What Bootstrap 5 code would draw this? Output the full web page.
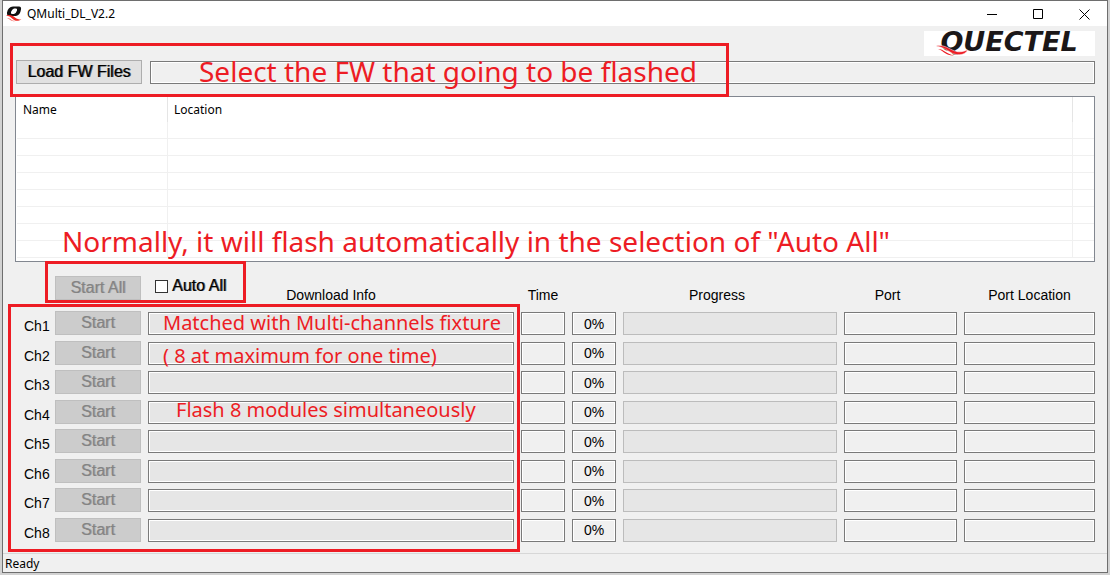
<!DOCTYPE html>
<html lang="en">
<head>
<meta charset="utf-8">
<meta name="viewport" content="width=device-width, initial-scale=1">
<title>QMulti_DL_V2.2</title>
<link rel="stylesheet" href="https://cdn.jsdelivr.net/npm/bootstrap@5.3.0/dist/css/bootstrap.min.css">
<style>
  :root { --face: #f0f0f0; --edge: #7a7a7a; --note: #ed1c24; }
  body { background: #d2d2d2; color: #000; font: 12px/16px "Noto Sans", sans-serif; }
  .app-window { min-height: 100vh; padding: 0 2px 2px; }
  .app-frame { background: var(--face); border: 1px solid #6e6e6e; }
  .title-bar { height: 25px; background: #fff; padding-left: 3px; }
  .title-bar span { margin-left: 5px; }
  .title-bar button { width: 46px; height: 25px; border: 0; background: none; padding: 0; }
  .app-main { padding: 5px 12px 11px; }
  .brand { width: 171px; height: 25px; background: #fff; overflow: visible; }
  .brand text { font: italic bold 27px "DejaVu Sans", sans-serif; fill: #1b1718; }

  .btn-win { height: 24px; padding: 0; border: 1px solid #adadad; border-radius: 0; background: #e1e1e1;
    font: 16px/22px "Liberation Sans", sans-serif; color: #000; }
  .btn-win:disabled { background: #ccc; border-color: #bfbfbf; color: #838383; opacity: 1; text-shadow: 1px 0 0 rgba(131, 131, 131, .5); }
  .heavy { text-shadow: 1px 0 0 rgba(0, 0, 0, .6); }
  .btn-load { width: 126px; }

  .field { height: 23px; width: 100%; min-width: 0; padding: 0 4px; border: 1px solid var(--edge); border-radius: 0;
    background: var(--face); box-shadow: inset 0 0 0 1px #fff; }
  .field-info { background: #e6e6e6; }
  .field-pct { text-align: center; }
  .meter { height: 23px; border: 1px solid #bcbcbc; background: #e6e6e6; border-radius: 0; }
  .narrow { font: 14px/18px "Liberation Sans Narrow", "Liberation Sans", sans-serif; }

  .tool-row { margin-top: 4px; padding-left: 1px; z-index: 1; }
  .file-list { margin-top: 12px; background: #fff; border: 1px solid #828790; padding: 0 0 3px 1px; }
  .file-list table { width: 100%; table-layout: fixed; border-collapse: separate; border-spacing: 0; }
  .file-list th { height: 25px; font-weight: 400; padding: 0 6px; border-right: 1px solid #e5e5e5; }
  .file-list td { height: 17px; padding: 0; border-right: 1px solid #f0f0f0; border-bottom: 1px solid #f0f0f0; }
  .file-list th:last-child, .file-list td:last-child { border-right: 0; }
  .col-name { width: 151px; }
  .col-end { width: 21px; }

  .ch-grid { display: grid; column-gap: 7px; padding-left: 9px;
    grid-template-columns: 24px 86px minmax(0, 366fr) 44px 44px minmax(0, 214fr) minmax(0, 113fr) minmax(0, 131fr); }
  .ch-head { height: 24px; margin-top: 14px; }
  .ch-head .narrow { padding-top: 10px; text-align: center; white-space: nowrap; }
  .ch-head .lead-in { padding-right: 26px; }
  .ch-body { margin-top: 12px; align-content: space-between; row-gap: 6px; }
  .ch-body > * { align-self: start; }
  .ch-body > .btn-win { margin: -1px 0 0; }
  .ch-label { height: 23px; padding-top: 5px; }
  .auto-all { left: 7px; top: 1px; font: 16px/18px "Liberation Sans", sans-serif; gap: 4px; }
  .auto-all input { appearance: none; width: 13px; height: 13px; margin: 0; border: 1px solid #333; background: #fff; }
  .auto-all input:checked { background: #333; }

  .mark-box { position: absolute; border: 3px solid var(--note); pointer-events: none; }
  .note { position: absolute; color: var(--note); white-space: nowrap; pointer-events: none; }
  .note-lg { font: 28px/36px "Noto Sans", sans-serif; }
  .note-md { font: 20px/24px "Noto Sans", sans-serif; }
  .mark-load { left: -5px; right: 366px; top: -17px; bottom: -13px; }
  .note-load { left: 184px; top: -7px; }
  .note-auto { left: 46px; bottom: 2px; }
  .mark-auto { left: 30px; top: -15px; width: 201px; height: 42px; }
  .ch-body > .mark-channels { left: -7px; top: -8px; bottom: -10px; width: 512px; align-self: stretch; }
  .note-c1 { left: 148px; top: -1px; }
  .note-c2 { left: 148px; top: 32px; }
  .note-c3 { left: 161px; top: 86px; }

  .status-bar { border-top: 1px solid #d7d7d7; height: 19px; padding: 2px 2px 0; }
</style>
</head>
<body>
<div class="app-window d-flex flex-column">
  <div class="app-frame d-flex flex-column flex-grow-1">
    <header class="title-bar d-flex align-items-center">
      <svg width="16" height="16" viewBox="0 0 16 16" aria-hidden="true">
        <path fill="#111" fill-rule="evenodd" d="M7 .5H13Q15.500.500 15 3.500Q14.200 9 10 10H4Q.5 10 1 6.500Q2 1 7 .5ZM8 2.500Q6 3 5 6Q4.500 8 6 8H8Q10 7.500 11 4.500Q11.500 2.500 10 2.500Z"/>
        <path d="M0 9.600C4 8.200 7 10 9 11.500S13 13.600 15.500 13.500C11 16 8.400 14.500 6.400 12.700S3 10 0 9.600Z" fill="#ee2a24"/>
        <path d="M1 12C4 11.500 5 14.500 9 15C5 16 4 13 1 12Z" fill="#f36c66"/>
      </svg>
      <span class="flex-grow-1">QMulti_DL_V2.2</span>
      <button type="button" aria-label="Minimize"><svg width="11" height="11" viewBox="0 0 11 11"><path d="M0 5.500H10" stroke="#000"/></svg></button>
      <button type="button" aria-label="Maximize"><svg width="11" height="11" viewBox="0 0 11 11"><path d="M.5.500H9.500V9.500H.5Z" fill="none" stroke="#000"/></svg></button>
      <button type="button" aria-label="Close"><svg width="11" height="11" viewBox="0 0 11 11"><path d="M.5.500L10.500 10.500M10.500.500L.5 10.500" stroke="#000"/></svg></button>
    </header>

    <main class="app-main d-flex flex-column flex-grow-1">
      <div class="d-flex justify-content-end">
        <svg class="brand" viewBox="0 0 171 25" role="img" aria-label="Quectel">
          <text x="85" y="20" text-anchor="middle">QUECTEL</text>
          <path d="M12 15C20 13 25 18 31 20C36 22 40 20 44 19C40 25 32 25 26 21S17 16 12 15Z" fill="#ed1c24" stroke="#fff" stroke-width=".5"/>
          <path d="M14 18C20 18 22 23 30 24.500C22 25 20 20 14 18Z" fill="#ed1c24"/>
        </svg>
      </div>

      <div class="tool-row position-relative d-flex gap-2">
        <button type="button" class="btn btn-win btn-load heavy flex-shrink-0">Load FW Files</button>
        <input class="field align-self-end" type="text" readonly aria-label="Firmware path">
        <div class="mark-box mark-load"></div>
        <div class="note note-lg note-load">Select the FW that going to be flashed</div>
      </div>

      <div class="file-list position-relative">
        <table>
          <colgroup><col class="col-name"><col><col class="col-end"></colgroup>
          <thead><tr><th scope="col">Name</th><th scope="col">Location</th><th aria-label="Spare"></th></tr></thead>
          <tbody>
            <tr><td></td><td></td><td></td></tr><tr><td></td><td></td><td></td></tr>
            <tr><td></td><td></td><td></td></tr><tr><td></td><td></td><td></td></tr>
            <tr><td></td><td></td><td></td></tr><tr><td></td><td></td><td></td></tr>
            <tr><td></td><td></td><td></td></tr><tr><td></td><td></td><td></td></tr>
          </tbody>
        </table>
        <div class="note note-lg note-auto">Normally, it will flash automatically in the selection of "Auto All"</div>
      </div>

      <div class="ch-grid ch-head position-relative">
        <span></span>
        <button type="button" class="btn btn-win" disabled>Start All</button>
        <div class="position-relative narrow">Download Info
          <label class="auto-all heavy position-absolute d-flex align-items-center"><input type="checkbox">Auto All</label>
        </div>
        <div class="narrow">Time</div>
        <span></span>
        <div class="narrow lead-in">Progress</div>
        <div class="narrow lead-in">Port</div>
        <div class="narrow">Port Location</div>
        <div class="mark-box mark-auto"></div>
      </div>

      <div class="ch-grid ch-body position-relative flex-grow-1" id="channels">
        <div class="mark-box mark-channels"></div>
        <div class="note note-md note-c1">Matched with Multi-channels fixture</div>
        <div class="note note-md note-c2">( 8 at maximum for one time)</div>
        <div class="note note-md note-c3">Flash 8 modules simultaneously</div>
      </div>
    </main>

    <footer class="status-bar">Ready</footer>
  </div>
</div>
<script src="https://cdn.jsdelivr.net/npm/bootstrap@5.3.0/dist/js/bootstrap.bundle.min.js"></script>
<script>
  // One grid row for each download channel
  const board = document.getElementById('channels');
  let rows = '';
  for (let n = 1; n <= 8; n++) {
    rows += `
      <label class="ch-label narrow" for="info${n}">Ch${n}</label>
      <button type="button" class="btn btn-win" disabled>Start</button>
      <input class="field field-info" id="info${n}" type="text" readonly>
      <input class="field" type="text" readonly aria-label="Ch${n} time">
      <input class="field field-pct narrow" type="text" readonly value="0%" aria-label="Ch${n} percent">
      <div class="progress meter" role="progressbar" aria-label="Ch${n} progress" aria-valuenow="0" aria-valuemin="0" aria-valuemax="100"></div>
      <input class="field" type="text" readonly aria-label="Ch${n} port">
      <input class="field" type="text" readonly aria-label="Ch${n} port location">`;
  }
  board.insertAdjacentHTML('afterbegin', rows);
</script>
</body>
</html>
